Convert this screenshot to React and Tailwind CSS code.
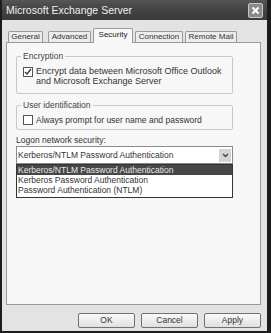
import React from 'react';

const font = { fontFamily: '"Liberation Sans", Arial, sans-serif' };

const tabs = [
  { name: 'General', cls: 'w-[35px]' },
  { name: 'Advanced', cls: 'w-[43px] ml-[5px]' },
  { name: 'Security', cls: 'w-[40px] ml-[2px]' },
  { name: 'Connection', cls: 'w-[48px] ml-[2px]' },
  { name: 'Remote Mail', cls: 'w-[52px] ml-[2px]' },
];

const Check = ({ checked }) => (
  <span className="w-[10px] h-[10px] border border-[#555] bg-white flex items-center justify-center shrink-0">
    {checked && (
      <svg width="8" height="8" viewBox="0 0 8 8">
        <path d="M1 4 L3 6 L7 1" stroke="#333" strokeWidth="1.3" fill="none" />
      </svg>
    )}
  </span>
);

const GroupBox = ({ label, children, className }) => (
  <div className={`relative border border-[#c8c8c8] rounded-[2px] ${className}`}>
    <span className="absolute left-[4px] top-[-7px] px-[2px] bg-[#f7f7f7] leading-[12px] text-[#444] text-[8.5px]">{label}</span>
    {children}
  </div>
);

const Button = ({ children }) => (
  <button className="w-[57px] h-[15px] border border-[#707070] rounded-[2px] bg-gradient-to-b from-[#fafafa] to-[#e0e0e0] text-[8.5px] leading-[13px] text-[#333]">
    {children}
  </button>
);

export default function App() {
  return (
    <div style={font} className="w-[271px] h-[333px] flex flex-col bg-[#1c1c1c] pl-[2px] pr-[4px] pb-[2px] text-[8.5px]">
      <div className="h-[20px] shrink-0 flex items-center justify-between bg-gradient-to-b from-[#555] via-[#434343] to-[#3a3a3a] pl-[4px] pr-[4px]">
        <span className="text-[10.5px] text-[#f0f0f0] leading-none">Microsoft Exchange Server</span>
        <span className="w-[15px] h-[15px] border border-[#c8c8c8] rounded-[2px] bg-[#8a8a8a] flex items-center justify-center">
          <svg width="9" height="9" viewBox="0 0 9 9">
            <path d="M1.5 1.5 L7.5 7.5 M7.5 1.5 L1.5 7.5" stroke="#fff" strokeWidth="2" />
          </svg>
        </span>
      </div>
      <div className="flex-1 bg-[#e3e3e3] flex flex-col pl-[4px] pr-[6px]">
        <div className="flex items-end h-[22px] pl-[2px] text-[8px] whitespace-nowrap">
          {tabs.map((t) =>
            t.name === 'Security' ? (
              <div key={t.name} className={`${t.cls} h-[15px] -mb-px relative z-10 border border-b-0 border-[#9a9a9a] bg-[#f7f7f7] rounded-t-[2px] flex items-start justify-center pt-[2px] leading-none text-[#222]`}>
                {t.name}
              </div>
            ) : (
              <div key={t.name} className={`${t.cls} h-[11px] border border-b-0 border-[#9a9a9a] bg-[#ececec] rounded-t-[2px] flex items-center justify-center text-[#333] leading-none`}>
                {t.name}
              </div>
            )
          )}
        </div>
        <div className="h-[263px] border border-[#9a9a9a] bg-[#f7f7f7] pl-[9px] pt-[13px] text-[#333]">
          <GroupBox label="Encryption" className="w-[217px] h-[38px] pl-[6px] pt-[10px]">
            <div className="flex items-start gap-[3px]">
              <Check checked />
              <span className="leading-[10px] mt-[-1px] text-[9px]">
                Encrypt data between Microsoft Office Outlook<br />and Microsoft Exchange Server
              </span>
            </div>
          </GroupBox>
          <GroupBox label="User identification" className="w-[217px] h-[25px] mt-[11px] pl-[6px] pt-[10px]">
            <div className="flex items-center gap-[3px] -mt-[1px]">
              <Check />
              <span className="leading-[10px]">Always prompt for user name and password</span>
            </div>
          </GroupBox>
          <div className="mt-[4px] leading-[12px]">Logon network security:</div>
          <div className="w-[217px] h-[18px] border border-[#8a8a8a] bg-white flex items-center justify-between pl-[1px] pr-[1px]">
            <span className="leading-none">Kerberos/NTLM Password Authentication</span>
            <span className="w-[12px] h-[13px] bg-[#d4d4d4] flex items-center justify-center">
              <svg width="7" height="5" viewBox="0 0 7 5">
                <path d="M1 1 L3.5 3.5 L6 1" stroke="#444" strokeWidth="1.4" fill="none" />
              </svg>
            </span>
          </div>
          <div className="w-[217px] border border-[#333] bg-white leading-[10px] pb-[2px]">
            <div className="bg-[#464646] text-[#e8e8e8] pl-[1px]">Kerberos/NTLM Password Authentication</div>
            <div className="pl-[1px]">Kerberos Password Authentication</div>
            <div className="pl-[1px]">Password Authentication (NTLM)</div>
          </div>
        </div>
        <div className="flex justify-end gap-[6px] mt-[8px]">
          <Button>OK</Button>
          <Button>Cancel</Button>
          <Button>Apply</Button>
        </div>
      </div>
    </div>
  );
}
